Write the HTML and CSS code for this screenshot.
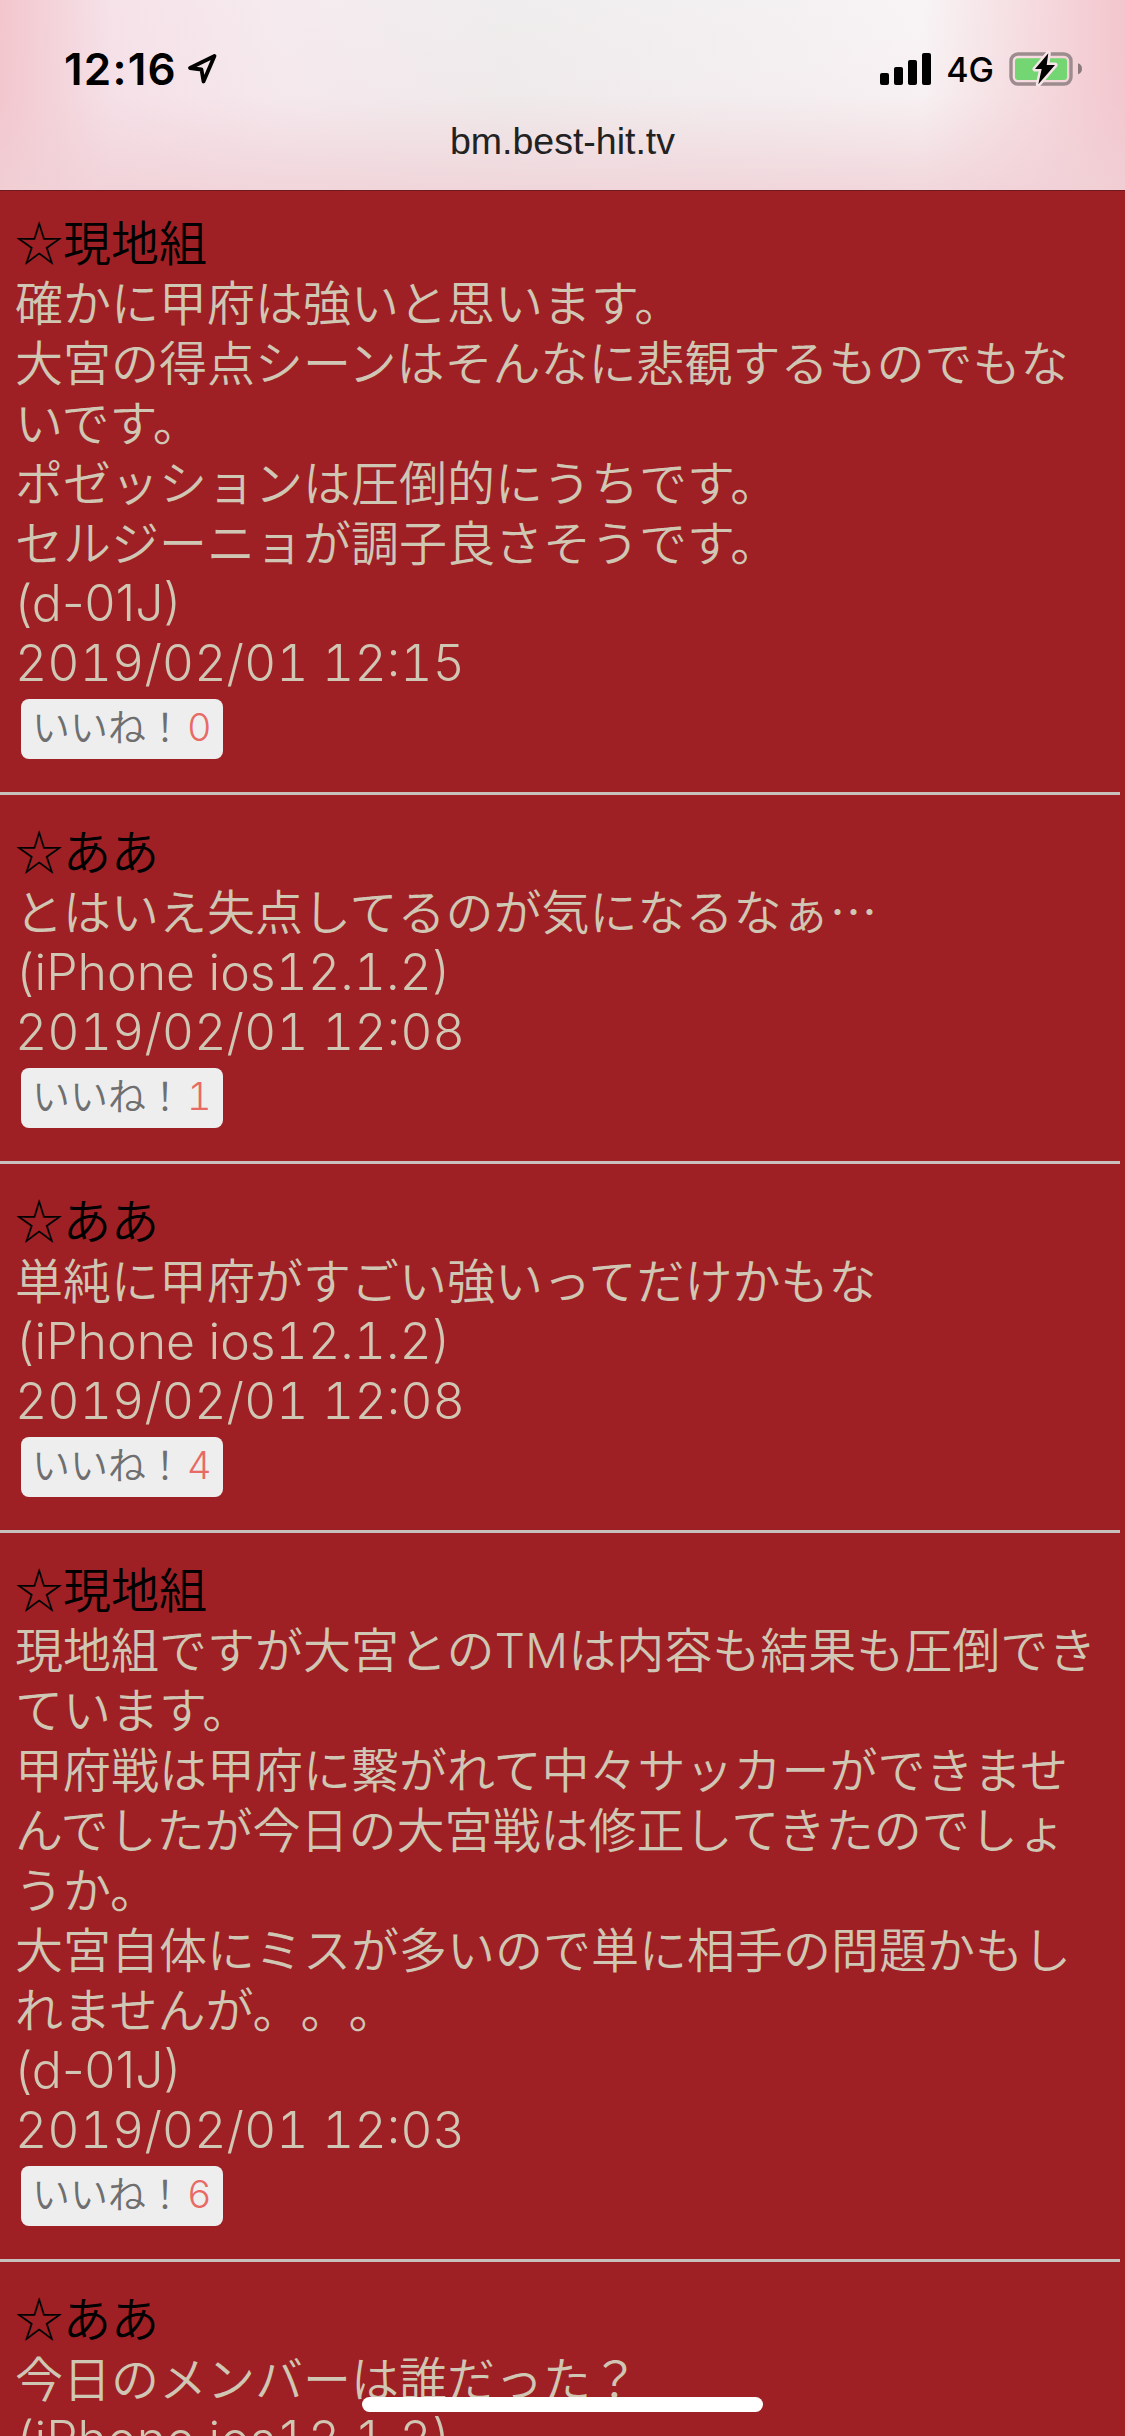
FILE: index.html
```html
<!DOCTYPE html>
<html lang="ja">
<head>
    <meta charset="UTF-8">
    <title>bm.best-hit.tv</title>
    <link rel="stylesheet" href="styles.css">
</head>
<body>
    <header class="top-bar">
        <div class="status-bar">
            <div class="status-left">
                <span class="clock">12:16</span>
                <svg class="arrow-icon" width="30" height="32" viewBox="0 0 30 32">
                    <path d="M27.500 3 L3 15 L14.500 16.500 L16.500 28.500 Z" fill="none" stroke="#000" stroke-width="3.800" stroke-linejoin="round"/>
                </svg>
            </div>
            <div class="status-right">
                <div class="signal">
                    <span class="bar bar-1"></span>
                    <span class="bar bar-2"></span>
                    <span class="bar bar-3"></span>
                    <span class="bar bar-4"></span>
                </div>
                <span class="network">4G</span>
                <svg class="battery-icon" width="74" height="36" viewBox="0 0 74 36">
                    <rect x="3" y="3" width="60" height="30" rx="7" fill="none" stroke="#9c8c8f" stroke-width="3.400"/>
                    <rect x="7" y="7.300" width="52" height="21.700" rx="3" fill="#74d672"/>
                    <path d="M70 12.300 C72.500 13 74 15 74 17.800 C74 20.600 72.500 22.600 70 23.300 Z" fill="#8a7a7d"/>
                    <path d="M40.300 2.300 L27 18 L33.700 18 L30.300 33.300 L47 14 L38.700 14 Z" fill="#000" stroke="#f6e4e8" stroke-width="5" stroke-linejoin="round" paint-order="stroke"/>
                </svg>
            </div>
        </div>
        <div class="url">bm.best-hit.tv</div>
    </header>

    <main class="board">
        <article class="post">
            <div class="name">☆現地組</div>
            <div class="text">確かに甲府は強いと思います。<br>大宮の得点シーンはそんなに悲観するものでもないです。<br>ポゼッションは圧倒的にうちです。<br>セルジーニョが調子良さそうです。</div>
            <div class="meta plain">(d-01J)</div>
            <div class="meta">2019/02/01 12:15</div>
            <button class="like">いいね！<span class="count">0</span></button>
        </article>
        <article class="post">
            <div class="name">☆ああ</div>
            <div class="text">とはいえ失点してるのが気になるなぁ…</div>
            <div class="meta">(iPhone ios12.1.2)</div>
            <div class="meta">2019/02/01 12:08</div>
            <button class="like">いいね！<span class="count">1</span></button>
        </article>
        <article class="post">
            <div class="name">☆ああ</div>
            <div class="text">単純に甲府がすごい強いってだけかもな</div>
            <div class="meta">(iPhone ios12.1.2)</div>
            <div class="meta">2019/02/01 12:08</div>
            <button class="like">いいね！<span class="count">4</span></button>
        </article>
        <article class="post">
            <div class="name">☆現地組</div>
            <div class="text">現地組ですが大宮との<span class="latin">TM</span>は内容も結果も圧倒できています。<br>甲府戦は甲府に繋がれて中々サッカーができませんでしたが今日の大宮戦は修正してきたのでしょうか。<br>大宮自体にミスが多いので単に相手の問題かもしれませんが。。。</div>
            <div class="meta plain">(d-01J)</div>
            <div class="meta">2019/02/01 12:03</div>
            <button class="like">いいね！<span class="count">6</span></button>
        </article>
        <article class="post">
            <div class="name">☆ああ</div>
            <div class="text">今日のメンバーは誰だった？</div>
            <div class="meta">(iPhone ios12.1.2)</div>
        </article>
    </main>

    <div class="home-indicator"></div>
</body>
</html>
```

FILE: styles.css
```css
html, body {
    margin: 0;
    padding: 0;
}

body {
    position: relative;
    width: 1125px;
    height: 2436px;
    overflow: hidden;
    background: #9e2024;
    font-family: "Noto Sans CJK JP", sans-serif;
    font-weight: 350;
    text-spacing-trim: space-all;
}

.top-bar {
    height: 191px;
    box-sizing: border-box;
    border-bottom: 1px solid #6e1a1e;
    background:
        linear-gradient(to bottom, rgba(240, 208, 214, 0), rgba(240, 208, 214, 0.1) 50%, rgba(240, 208, 214, 0.8)),
        linear-gradient(to right, #f3c6cd, #f6e2e9 10%, #f5ebef 25%, #efeded 45%, #f4f1f2 70%, #f8f4f5 82%, #f3c6cd 100%);
}

.status-bar {
    display: flex;
    justify-content: space-between;
    align-items: center;
    height: 32px;
    padding: 53px 43px 0 64px;
    font-family: Inter, sans-serif;
}

.status-left, .status-right {
    display: flex;
    align-items: center;
}

.clock {
    font-size: 44px;
    font-weight: 600;
    letter-spacing: 1.2px;
    color: #000;
}

.arrow-icon {
    margin-left: 10px;
}

.signal {
    display: flex;
    align-items: flex-end;
    gap: 5px;
    height: 32px;
}

.bar {
    width: 9px;
    background: #000;
    border-radius: 2px;
}

.bar-1 { height: 12px; }
.bar-2 { height: 18px; }
.bar-3 { height: 25px; }
.bar-4 { height: 32px; }

.network {
    margin: 0 14px 0 15px;
    font-size: 34px;
    font-weight: 500;
    color: #000;
}

.url {
    margin-top: 36px;
    text-align: center;
    font-family: "Liberation Sans", sans-serif;
    font-weight: 400;
    font-size: 37.5px;
    line-height: 40px;
    color: #222;
}

.board {
    padding-top: 19px;
}

.post {
    width: 1120px;
    box-sizing: border-box;
    padding: 0 15px 33px;
    margin-bottom: 24px;
    border-bottom: 3px solid #c8c0bc;
    font-size: 48px;
    line-height: 60px;
    color: #d0c6b4;
}

.post:last-child {
    border-bottom: none;
}

.name {
    color: #000;
}

.meta {
    padding-top: 3px;
    margin-bottom: -3px;
    font-family: Inter, sans-serif;
    font-size: 50px;
    font-weight: 300;
    font-variant-numeric: tabular-nums;
}

.meta.plain {
    font-variant-numeric: normal;
}

.latin {
    font-family: Inter, sans-serif;
    font-weight: 300;
    line-height: 1;
}

.like {
    display: block;
    width: 202px;
    height: 60px;
    box-sizing: border-box;
    margin: 9px 0 0 6px;
    padding: 0 0 8px 11px;
    border: none;
    border-radius: 8px;
    background: #eeeeee;
    font-family: inherit;
    font-weight: 350;
    font-size: 38px;
    line-height: 52px;
    text-align: left;
    color: #6f6f6f;
}

.count {
    margin-left: 3px;
    font-family: Inter, sans-serif;
    font-weight: 300;
    font-variant-numeric: tabular-nums;
    line-height: 1;
    color: #e86a64;
}

.home-indicator {
    position: absolute;
    left: 362px;
    top: 2397px;
    width: 401px;
    height: 15px;
    border-radius: 8px;
    background: #fff;
}
```
